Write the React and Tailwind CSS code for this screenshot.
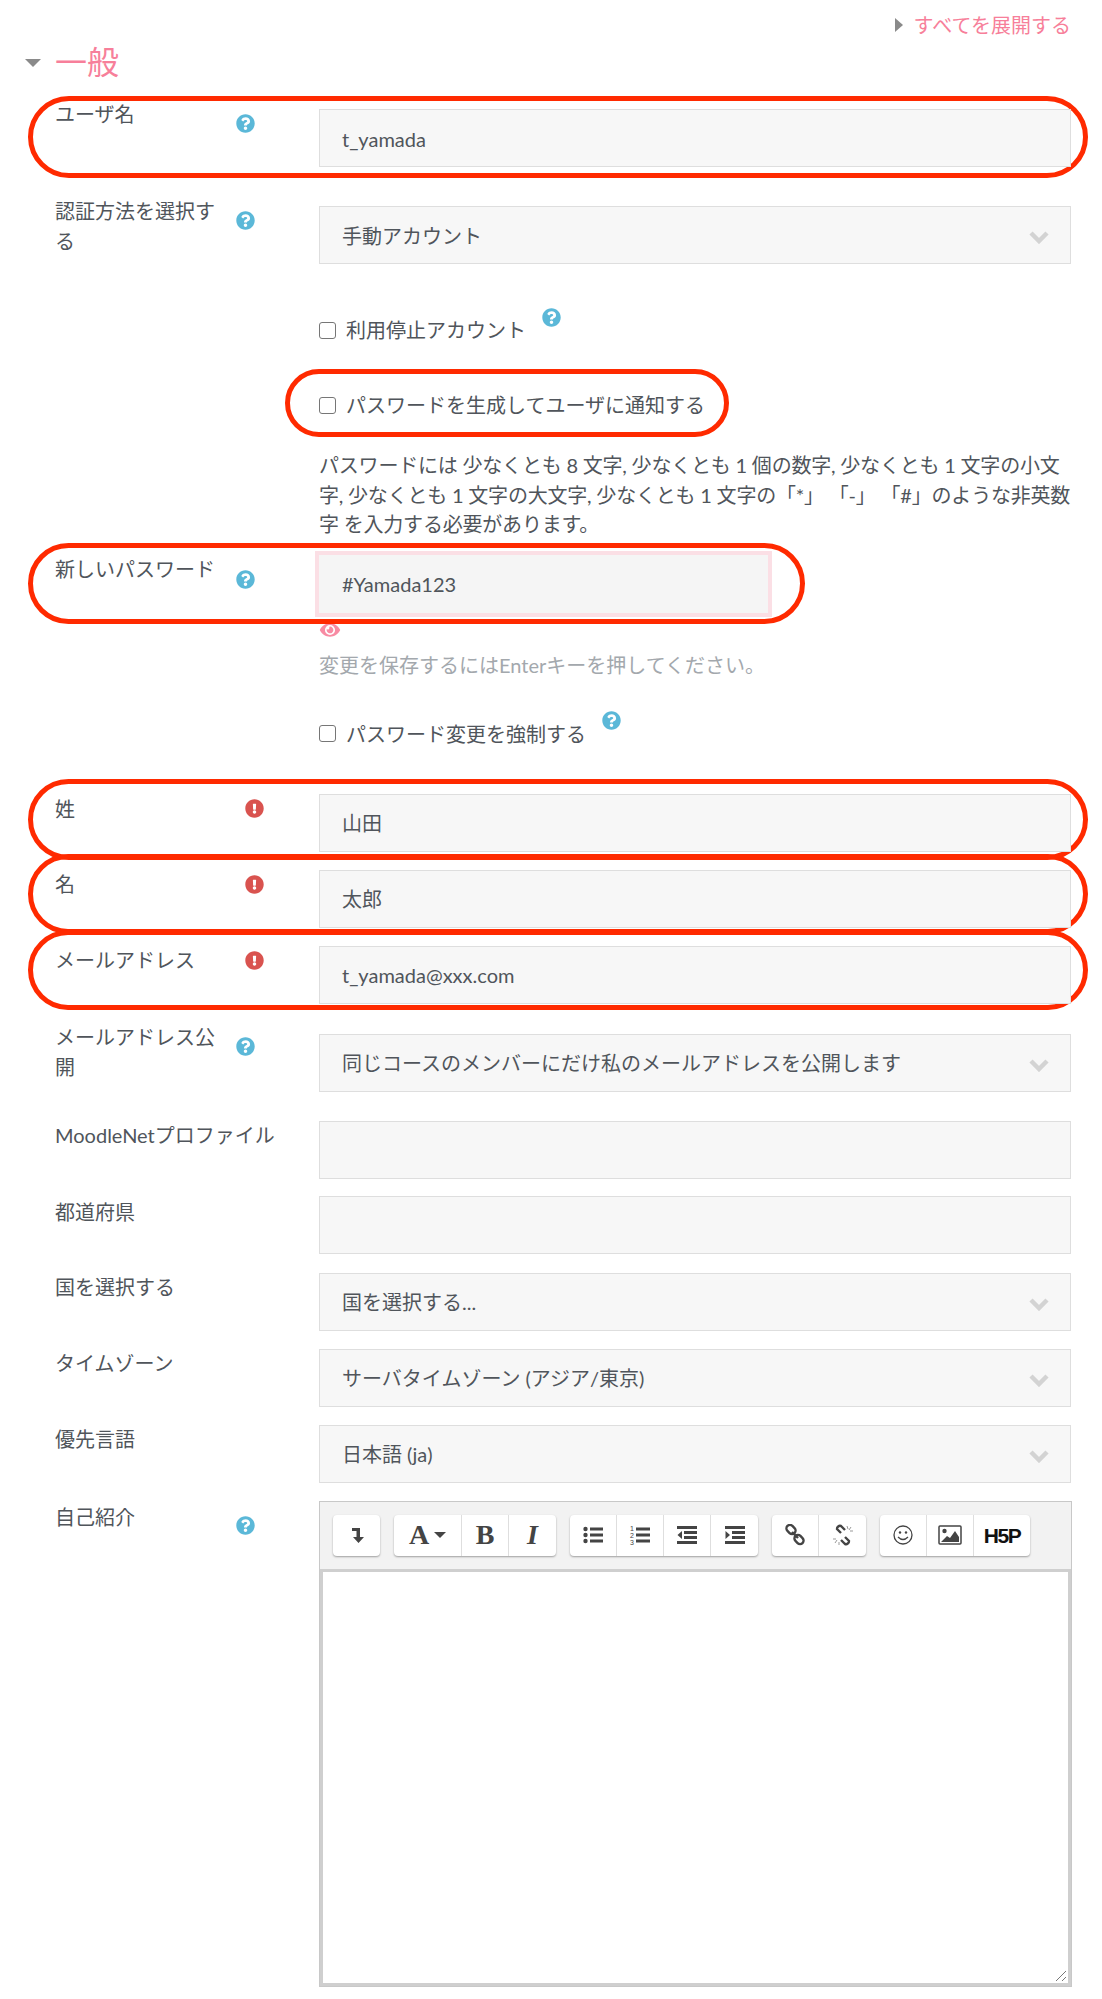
import React from "react";
import { FaQuestionCircle, FaExclamationCircle, FaEye } from "react-icons/fa";

const Help = ({ cls = "" }) => <FaQuestionCircle className={"w-[19px] h-[19px] text-[#5bb8d8] " + cls} />;
const Err = () => <FaExclamationCircle className="w-[19px] h-[19px] text-[#d9534f]" />;

const Chevron = () => (
  <svg viewBox="0 0 22 14" className="absolute right-[20px] top-[23px] w-[22px] h-[14px]">
    <path d="M3 3 L11 11 L19 3" fill="none" stroke="#d3d3d3" strokeWidth="4.5" />
  </svg>
);

const Ring = ({ cls }) => (
  <div className={"absolute border-[5px] border-[#ff2a00] rounded-full pointer-events-none " + cls} />
);

function Field({ label, icon, value, select, ring, mb = "mb-[18px]", labelCls = "mt-0", iconCls = "mt-[5px]" }) {
  return (
    <div className={"relative flex h-[58px] " + mb}>
      {ring}
      <div className="w-[264px] shrink-0 pl-[55px] flex items-start">
        <div className={"w-[166px] leading-[30px] " + labelCls}>{label}</div>
        {icon === "help" && <Help cls={"ml-[15px] shrink-0 " + iconCls} />}
        {icon === "err" && <div className={"shrink-0 ml-[29px] " + iconCls}><Err /></div>}
      </div>
      <div className="relative ml-[55px] w-[752px] h-[58px] bg-[#f7f7f7] border border-[#dedede] pl-[22px] flex items-center">
        <span className="pt-[1px]">{value}</span>
        {select && <Chevron />}
      </div>
    </div>
  );
}

function Check({ label, icon, iconCls = "" }) {
  return (
    <div className="flex items-center ml-[319px] h-[30px]">
      <span className="w-[17px] h-[17px] border border-[#767676] rounded-[3px] bg-white shrink-0" />
      <span className="ml-[10px]">{label}</span>
      {icon && <Help cls={iconCls} />}
    </div>
  );
}

const Btn = ({ children, w = "w-[47px]", last }) => (
  <div className={"h-[41px] flex items-center justify-center text-[#444] " + w + (last ? "" : " border-r border-[#dedede]")}>{children}</div>
);
const Group = ({ children, ml = "ml-[14px]" }) => (
  <div className={"flex bg-white rounded-[4px] shadow-[0_1px_2px_rgba(0,0,0,0.35)] " + ml}>{children}</div>
);

const S = ({ children, w = 22, h = 22 }) => (
  <svg viewBox="0 0 22 22" width={w} height={h} fill="#444">{children}</svg>
);

const LinkIcon = () => (
  <svg viewBox="0 0 22 22" width="22" height="22" fill="none" stroke="#444" strokeWidth="2.4">
    <rect x="2" y="2" width="10" height="7" rx="3.5" transform="rotate(45 7 5.5)" />
    <rect x="10" y="12" width="10" height="7" rx="3.5" transform="rotate(45 15 15.5)" />
    <path d="M8 8 L14 14" />
  </svg>
);
const UnlinkIcon = () => (
  <svg viewBox="0 0 22 22" width="22" height="22" fill="none" stroke="#444" strokeWidth="2.4">
    <path d="M9 9 L5 5 a3 3 0 0 1 4 -3 L13 6" />
    <path d="M13 13 L17 17 a3 3 0 0 1 -4 3 L9 16" />
    <path d="M15 2 l1 3 M19 3 l-2 3 M21 7 l-3 0 M1 15 l3 0 M3 19 l2 -3 M7 21 l0 -3" stroke="#999" strokeWidth="1" />
  </svg>
);

export default function App() {
  return (
    <div className="relative w-[1102px] h-[1999px] bg-white overflow-hidden text-[20px] leading-[30px] text-[#50555b]" style={{ fontFamily: '"Lato","Noto Sans CJK JP",sans-serif' }}>
      <div className="flex justify-end items-center pr-[31px] pt-[9px] h-[40px] text-[#f77f9a]">
        <svg viewBox="0 0 8 14" className="w-[8px] h-[14px] mr-[11px]"><path d="M0 0 L8 7 L0 14 Z" fill="#8a8a8a" /></svg>
        すべてを展開する
      </div>
      <div className="flex items-center h-[46px] -mt-[1px] mb-[24px]">
        <svg viewBox="0 0 16 8" className="w-[16px] h-[8px] ml-[25px] mt-[1px]"><path d="M0 0 H16 L8 8 Z" fill="#8a8a8a" /></svg>
        <span className="ml-[14px] text-[32px] text-[#f77f9a]">一般</span>
      </div>

      <Field label="ユーザ名" icon="help" value="t_yamada" mb="mb-[39px]" labelCls="-mt-[10px]" ring={<Ring cls="left-[28px] w-[1060px] -top-[13px] h-[82px]" />} />
      <Field label="認証方法を選択する" icon="help" value="手動アカウント" select mb="mb-[51px]" labelCls="-mt-[10px]" />

      <Check label="利用停止アカウント" icon iconCls="ml-[16px] -mt-[26px]" />
      <div className="relative mt-[45px]">
        <Ring cls="left-[285px] w-[444px] -top-[21px] h-[68px]" />
        <Check label="パスワードを生成してユーザに通知する" />
      </div>
      <p className="ml-[319px] w-[756px] mt-[31px] leading-[29.5px] mb-[15px] tracking-[-0.2px]">
        パスワードには 少なくとも 8 文字, 少なくとも 1 個の数字, 少なくとも 1 文字の小文字, 少なくとも 1 文字の大文字, 少なくとも 1 文字の「*」 「-」 「#」のような非英数字 を入力する必要があります。
      </p>

      <div className="relative flex h-[58px]">
        <div className="w-[264px] shrink-0 pl-[55px] flex items-start">
          <div className="w-[166px] -mt-[1px]">新しいパスワード</div>
          <Help cls="mt-[15px] ml-[15px] shrink-0" />
        </div>
        <div className="ml-[55px] w-[449px] h-[58px] bg-[#f5f5f5] shadow-[0_0_0_4px_#fbdfe5] pl-[23px] flex items-center">#Yamada123</div>
        <Ring cls="left-[28px] w-[777px] -top-[12px] h-[81px]" />
      </div>
      <FaEye className="ml-[319px] mt-[8px] w-[22px] h-[18px] text-[#f88ba3]" />
      <div className="ml-[319px] mt-[11px] text-[#a3a8ad]">変更を保存するにはEnterキーを押してください。</div>
      <div className="mt-[39px]">
        <Check label="パスワード変更を強制する" icon iconCls="ml-[16px] -mt-[26px]" />
      </div>

      <div className="mt-[45px]">
        <Field label="姓" icon="err" value="山田" labelCls="mt-0" iconCls="mt-[5px]" ring={<Ring cls="left-[28px] w-[1060px] -top-[15px] h-[81px]" />} />
        <Field label="名" icon="err" value="太郎" labelCls="-mt-[1px]" iconCls="mt-[5px]" ring={<Ring cls="left-[28px] w-[1060px] -top-[16px] h-[80px]" />} />
        <Field label="メールアドレス" icon="err" value="t_yamada@xxx.com" mb="mb-[30px]" labelCls="-mt-[1px]" iconCls="mt-[5px]" ring={<Ring cls="left-[28px] w-[1060px] -top-[16px] h-[80px]" />} />
        <Field label="メールアドレス公開" icon="help" value="同じコースのメンバーにだけ私のメールアドレスを公開します" select mb="mb-[29px]" labelCls="-mt-[12px]" iconCls="mt-[3px]" />
        <Field label={<span className="whitespace-nowrap">MoodleNetプロファイル</span>} value="" mb="mb-[17px]" labelCls="-mt-[1px]" />
        <Field label="都道府県" value="" mb="mb-[19px]" labelCls="mt-[1px]" />
        <Field label="国を選択する" value="国を選択する..." select labelCls="-mt-[1px]" />
        <Field label="タイムゾーン" value="サーバタイムゾーン (アジア/東京)" select labelCls="-mt-[1px]" />
        <Field label="優先言語" value="日本語 (ja)" select labelCls="-mt-[1px]" />
      </div>

      <div className="relative flex">
        <div className="w-[264px] shrink-0 pl-[55px] flex items-start">
          <div className="w-[166px] mt-[1px]">自己紹介</div>
          <Help cls="mt-[15px] ml-[15px] shrink-0" />
        </div>
        <div className="ml-[55px] w-[753px] h-[486px] border border-[#c8c8c8] bg-[#f2f2f2] flex flex-col">
          <div className="h-[67px] pt-[13px] pl-[13px] flex items-start shrink-0">
            <Group ml="">
              <Btn last>
                <S><path d="M6 4 H14 V13 H18 L12.5 19 L7 13 H10.5 V7 H6 Z" /></S>
              </Btn>
            </Group>
            <Group>
              <Btn w="w-[68px]">
                <span className="text-[28px] font-bold leading-none" style={{ fontFamily: '"Liberation Serif",serif' }}>A</span>
                <svg viewBox="0 0 12 6" className="w-[12px] h-[6px] ml-[5px]"><path d="M0 0 H12 L6 6 Z" fill="#444" /></svg>
              </Btn>
              <Btn><span className="text-[28px] font-bold leading-none" style={{ fontFamily: '"Liberation Serif",serif' }}>B</span></Btn>
              <Btn last><span className="text-[28px] font-bold italic leading-none" style={{ fontFamily: '"Liberation Serif",serif' }}>I</span></Btn>
            </Group>
            <Group>
              <Btn>
                <S><circle cx="3.5" cy="5" r="2.2" /><circle cx="3.5" cy="11" r="2.2" /><circle cx="3.5" cy="17" r="2.2" /><rect x="8" y="3.5" width="13" height="3" /><rect x="8" y="9.5" width="13" height="3" /><rect x="8" y="15.5" width="13" height="3" /></S>
              </Btn>
              <Btn>
                <svg viewBox="0 0 22 22" width="22" height="22" fill="#444">
                  <text x="1" y="7" fontSize="7" fontFamily="Liberation Sans">1</text>
                  <text x="1" y="14" fontSize="7" fontFamily="Liberation Sans">2</text>
                  <text x="1" y="21" fontSize="7" fontFamily="Liberation Sans">3</text>
                  <rect x="7" y="3.5" width="14" height="3" /><rect x="7" y="9.5" width="14" height="3" /><rect x="7" y="15.5" width="14" height="3" />
                </svg>
              </Btn>
              <Btn>
                <S><rect x="1" y="2" width="20" height="3" /><rect x="8" y="7" width="13" height="3" /><rect x="8" y="12" width="13" height="3" /><rect x="1" y="17" width="20" height="3" /><path d="M6 7 V15 L1.5 11 Z" /></S>
              </Btn>
              <Btn last>
                <S><rect x="1" y="2" width="20" height="3" /><rect x="8" y="7" width="13" height="3" /><rect x="8" y="12" width="13" height="3" /><rect x="1" y="17" width="20" height="3" /><path d="M1.5 7 V15 L6 11 Z" /></S>
              </Btn>
            </Group>
            <Group>
              <Btn><LinkIcon /></Btn>
              <Btn last><UnlinkIcon /></Btn>
            </Group>
            <Group>
              <Btn>
                <svg viewBox="0 0 22 22" width="22" height="22" fill="none" stroke="#444" strokeWidth="1.3">
                  <circle cx="11" cy="11" r="9" />
                  <circle cx="8" cy="8.5" r="1.2" fill="#444" stroke="none" /><circle cx="14" cy="8.5" r="1.2" fill="#444" stroke="none" />
                  <path d="M6 13 Q11 18 16 13" />
                </svg>
              </Btn>
              <Btn>
                <svg viewBox="0 0 24 20" width="24" height="20">
                  <rect x="1" y="1" width="22" height="18" rx="1" fill="#fff" stroke="#444" strokeWidth="1.5" />
                  <circle cx="6.5" cy="6" r="2.2" fill="#444" />
                  <path d="M3 17 L9 11 L12 13 L17 6 L21 12 V17 Z" fill="#444" />
                </svg>
              </Btn>
              <Btn w="w-[56px]" last>
                <span className="text-[21px] font-bold text-[#111] tracking-[-1.5px] leading-none" style={{ fontFamily: '"Liberation Sans",sans-serif' }}>H5P</span>
              </Btn>
            </Group>
          </div>
          <div className="relative flex-1 border-[3px] border-[#cfcfcf] bg-white">
            <svg viewBox="0 0 12 12" className="absolute right-[1px] bottom-[1px] w-[12px] h-[12px]">
              <path d="M1 11 L11 1 M7 11 L11 7" stroke="#777" strokeWidth="1" fill="none" />
            </svg>
          </div>
        </div>
      </div>
    </div>
  );
}
